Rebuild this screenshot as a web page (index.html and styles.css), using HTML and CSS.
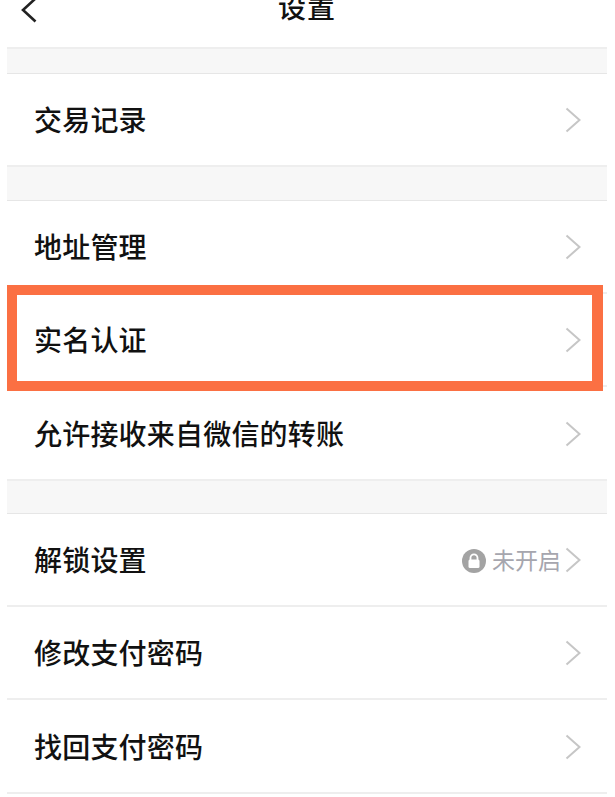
FILE: index.html
```html
<!DOCTYPE html>
<html lang="zh-CN">
<head>
    <meta charset="UTF-8">
    <meta name="viewport" content="width=device-width, initial-scale=1.0">
    <title>设置</title>
    <link rel="stylesheet" href="styles.css">
</head>
<body>
    <svg width="0" height="0" class="defs">
        <symbol id="chevron" viewBox="0 0 16 26">
            <path d="M1.5 1.5 L14.5 13 L1.5 24.5" fill="none" stroke="currentColor" stroke-width="2"/>
        </symbol>
    </svg>

    <div class="page">
        <header class="topbar">
            <svg class="back" viewBox="0 0 16 26"><path d="M14.5 1.5 L2 13 L14.5 24.5" fill="none" stroke="currentColor" stroke-width="2.6"/></svg>
            <h1>设置</h1>
        </header>

        <div class="gap gap-first"></div>
        <a class="row row-first">
            <span class="label">交易记录</span>
            <svg class="arrow"><use href="#chevron"/></svg>
        </a>

        <div class="gap gap-mid"></div>
        <a class="row">
            <span class="label">地址管理</span>
            <svg class="arrow"><use href="#chevron"/></svg>
        </a>
        <a class="row">
            <span class="label">实名认证</span>
            <svg class="arrow"><use href="#chevron"/></svg>
            <span class="highlight"></span>
        </a>
        <a class="row row-short">
            <span class="label">允许接收来自微信的转账</span>
            <svg class="arrow"><use href="#chevron"/></svg>
        </a>

        <div class="gap gap-last"></div>
        <a class="row">
            <span class="label">解锁设置</span>
            <span class="status">
                <svg class="lock" viewBox="0 0 24 24">
                    <circle cx="12" cy="12" r="12" fill="#a3a3a3"/>
                    <rect x="6.5" y="10.5" width="11" height="8.5" rx="1.5" fill="#fff"/>
                    <path d="M8.5 11 V8.8 a3.5 3.5 0 0 1 7 0 V11" fill="none" stroke="#fff" stroke-width="1.8"/>
                </svg>
                未开启
            </span>
            <svg class="arrow"><use href="#chevron"/></svg>
        </a>
        <a class="row">
            <span class="label">修改支付密码</span>
            <svg class="arrow"><use href="#chevron"/></svg>
        </a>
        <a class="row">
            <span class="label">找回支付密码</span>
            <svg class="arrow"><use href="#chevron"/></svg>
        </a>
    </div>
</body>
</html>
```

FILE: styles.css
```css
html, body {
    margin: 0;
    padding: 0;
    height: 797px;
    overflow: hidden;
    background-color: #fff;
}
body {
    font-family: "Liberation Sans", "Noto Sans CJK SC", sans-serif;
    color: #111;
}
.defs {
    display: block;
    height: 0;
}
.page {
    width: 600px;
    margin-left: 7px;
}
.topbar {
    height: 47px;
    display: flex;
    align-items: flex-start;
    justify-content: center;
    position: relative;
    overflow: hidden;
}
.topbar h1 {
    margin: -9px 0 0;
    font-size: 28px;
    letter-spacing: 1px;
    line-height: 36px;
    font-weight: 500;
}
.back {
    position: absolute;
    left: 14px;
    top: -3px;
    width: 16px;
    height: 26px;
    color: #222;
}
.gap {
    background-color: #f7f7f7;
    border-top: 2px solid #eeeeee;
    border-bottom: 1px solid #e6e6e6;
    box-sizing: border-box;
}
.gap-first {
    height: 27px;
}
.gap-mid {
    height: 36px;
}
.gap-last {
    height: 35px;
}
.row {
    height: 93px;
    box-sizing: border-box;
    border-bottom: 2px solid #eeeeee;
    padding: 5px 26px 0 27px;
    display: flex;
    align-items: center;
    position: relative;
}
.row-first {
    height: 91px;
    border-bottom: none;
}
.row-short {
    height: 92px;
}
.row:last-child {
    height: 94px;
}
.row:has(+ .gap) {
    border-bottom: none;
}
.label {
    font-size: 28px;
    letter-spacing: 0.2px;
    line-height: 36px;
    font-weight: 500;
    flex: 1;
    white-space: nowrap;
}
.status {
    display: flex;
    align-items: center;
    font-size: 23px;
    line-height: 30px;
    color: #a6a6ae;
    margin-right: 4px;
    margin-top: -2px;
}
.lock {
    width: 24px;
    height: 24px;
    margin-right: 6px;
}
.arrow {
    width: 16px;
    height: 26px;
    color: #c6c6c6;
    margin-top: -4px;
}
.highlight {
    position: absolute;
    left: 0;
    top: -9px;
    width: 596px;
    height: 106px;
    box-sizing: border-box;
    border: 10px solid #fb7043;
    border-right-width: 11px;
}
```
